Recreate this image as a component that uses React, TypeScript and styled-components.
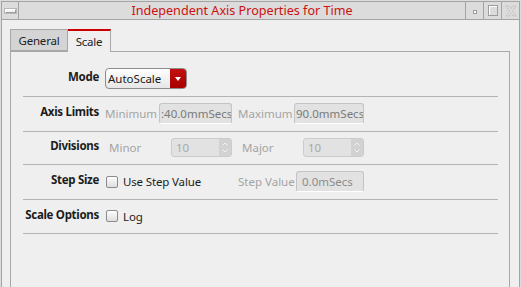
import React from "react";
import styled, { createGlobalStyle } from "styled-components";

const Global = createGlobalStyle`
  html, body { margin: 0; padding: 0; background: #dcdcdc; }
  body { font-family: "Noto Sans", "DejaVu Sans", sans-serif; font-size: 11.5px; }
  * { box-sizing: border-box; }
`;

const Frame = styled.div`
  width: 521px;
  height: 287px;
  padding: 1px 1px 0 1px;
  background: #dcdcdc;
  overflow: hidden;
`;

const Window = styled.div`
  height: 100%;
  border: 1px solid #a4a4a4;
  border-bottom: none;
  display: flex;
  flex-direction: column;
  background: #efefef;
`;

const TitleBar = styled.div`
  height: 18px;
  display: flex;
  background: #dcdcdc;
  border-bottom: 1px solid #a4a4a4;
  flex-shrink: 0;
`;

const TitleButton = styled.div<{ $w: number; $side: "left" | "right" }>`
  width: ${(p) => p.$w}px;
  height: 100%;
  display: flex;
  align-items: center;
  justify-content: center;
  ${(p) => (p.$side === "left" ? "border-right: 1px solid #a4a4a4;" : "border-left: 1px solid #a4a4a4;")}
  flex-shrink: 0;
`;

const MenuBar = styled.div`
  width: 11px;
  height: 4px;
  background: #f4f4f4;
  border: 1px solid #9c9c9c;
  border-top-color: #ffffff;
  border-left-color: #ffffff;
  box-shadow: 0 0 0 1px #b8b8b8;
`;

const Dot = styled.div`
  width: 4px;
  height: 4px;
  border: 1px solid #9c9c9c;
  background: #ffffff;
  margin-top: 2px;
`;

const MaxBox = styled.div`
  width: 10px;
  height: 11px;
  border: 1px solid #9c9c9c;
  box-shadow: inset 1px 1px 0 #ffffff;
`;

const Title = styled.div`
  flex: 1;
  text-align: center;
  color: #cc1111;
  font-size: 12.6px;
  line-height: 18px;
  white-space: nowrap;
`;

const Body = styled.div`
  flex: 1;
  display: flex;
  flex-direction: column;
  padding: 9px 9px 0 8px;
`;

const TabBar = styled.div`
  display: flex;
  align-items: flex-end;
  height: 22px;
  flex-shrink: 0;
`;

const Tab = styled.div<{ $active?: boolean; $w: number }>`
  position: relative;
  width: ${(p) => p.$w}px;
  height: ${(p) => (p.$active ? 23 : 22)}px;
  margin-bottom: ${(p) => (p.$active ? -1 : 0)}px;
  display: flex;
  align-items: center;
  justify-content: center;
  color: #222;
  letter-spacing: -0.2px;
  background: ${(p) => (p.$active ? "#efefef" : "#d4d4d4")};
  border: 1px solid #a8a8a8;
  border-bottom: ${(p) => (p.$active ? "none" : "1px solid #a8a8a8")};
  border-left: ${(p) => (p.$active ? "none" : "1px solid #a8a8a8")};
  border-top: ${(p) => (p.$active ? "2px solid #cc0000" : "1px solid #a8a8a8")};
  z-index: ${(p) => (p.$active ? 1 : 0)};
  padding-top: ${(p) => (p.$active ? 0 : 1)}px;
`;

const Pane = styled.div`
  flex: 1;
  border: 1px solid #a8a8a8;
  border-bottom: none;
  padding: 10px 11px 0 12px;
`;

const Row = styled.div`
  display: grid;
  grid-template-columns: 76px 127px 126px;
  column-gap: 6px;
  align-items: center;
  padding: 6px 0 7px;
  border-bottom: 1px solid #b4b4b4;
`;

const Label = styled.div`
  text-align: right;
  font-weight: bold;
  color: #1c1c1c;
  white-space: nowrap;
  letter-spacing: -0.3px;
  padding-bottom: 4px;
`;

const Cell = styled.div`
  display: flex;
  align-items: center;
  justify-content: space-between;
  white-space: nowrap;
`;

const Start = styled.div`
  display: flex;
  align-items: center;
  white-space: nowrap;
`;

const FieldLabel = styled.span<{ $indent?: number }>`
  color: #a4a4a4;
  padding-left: ${(p) => p.$indent ?? 0}px;
`;

const Combo = styled.div`
  width: 82px;
  height: 21px;
  display: flex;
  border: 1px solid #8c8c8c;
  border-radius: 4px;
  overflow: hidden;
  background: linear-gradient(#ffffff, #e6e6e6);
  color: #1a1a1a;
`;

const ComboText = styled.div`
  flex: 1;
  padding-left: 2px;
  line-height: 19px;
`;

const ComboArrow = styled.div`
  width: 16px;
  background: linear-gradient(#c41010, #a80000);
  display: flex;
  align-items: center;
  justify-content: center;
  &::after {
    content: "";
    border-left: 3.5px solid transparent;
    border-right: 3.5px solid transparent;
    border-top: 4px solid #ffffff;
  }
`;

const Input = styled.div<{ $w: number; $color: string; $pad?: number }>`
  width: ${(p) => p.$w}px;
  height: 21px;
  border: 1px solid #c4c4c4;
  border-bottom-color: #ffffff;
  border-radius: 3px;
  background: #e2e2e2;
  color: ${(p) => p.$color};
  padding-left: ${(p) => p.$pad ?? 1}px;
  line-height: 19px;
  overflow: hidden;
  white-space: nowrap;
`;

const Spin = styled.div`
  width: 61px;
  height: 19px;
  display: flex;
  border: 1px solid #cccccc;
  border-radius: 3px;
  background: #e2e2e2;
  overflow: hidden;
`;

const SpinText = styled.div`
  flex: 1;
  color: #a8a8a8;
  padding-left: 4px;
  line-height: 17px;
`;

const SpinButtons = styled.div`
  width: 12px;
  background: #d2d2d2;
  display: flex;
  align-items: center;
  justify-content: center;
`;

const Check = styled.div`
  width: 12px;
  height: 12px;
  margin-left: 1px;
  border: 1px solid #8c8c8c;
  border-radius: 2px;
  background: linear-gradient(#fdfdfd, #dedede);
`;

const CheckText = styled.span`
  margin-left: 5px;
  color: #1c1c1c;
  letter-spacing: -0.15px;
`;

const CheckLine = styled.div`
  display: flex;
  align-items: center;
  height: 20px;
  white-space: nowrap;
`;

const CloseIcon = () => (
  <svg width="12" height="12" viewBox="0 0 12 12">
    <path
      d="M1 1 L4 1 L6 3.5 L8 1 L11 1 L7.5 6 L11 11 L8 11 L6 8.5 L4 11 L1 11 L4.5 6 Z"
      fill="none"
      stroke="#bdbdbd"
      strokeWidth="1"
      strokeDasharray="2 1"
    />
  </svg>
);

const SpinArrows = () => (
  <svg width="8" height="13" viewBox="0 0 8 13">
    <path d="M1.5 4.5 L4 2 L6.5 4.5" fill="none" stroke="#f4f4f4" strokeWidth="1" />
    <path d="M1.5 8.5 L4 11 L6.5 8.5" fill="none" stroke="#f4f4f4" strokeWidth="1" />
  </svg>
);

export default function App() {
  return (
    <>
      <Global />
      <Frame>
        <Window>
          <TitleBar>
            <TitleButton $w={17} $side="left">
              <MenuBar />
            </TitleButton>
            <Title>Independent Axis Properties for Time</Title>
            <TitleButton $w={18} $side="right">
              <Dot />
            </TitleButton>
            <TitleButton $w={18} $side="right">
              <MaxBox />
            </TitleButton>
            <TitleButton $w={18} $side="right">
              <CloseIcon />
            </TitleButton>
          </TitleBar>
          <Body>
            <TabBar>
              <Tab $w={58}>General</Tab>
              <Tab $w={43} $active>
                Scale
              </Tab>
            </TabBar>
            <Pane>
              <Row>
                <Label>Mode</Label>
                <Start>
                  <Combo>
                    <ComboText>AutoScale</ComboText>
                    <ComboArrow />
                  </Combo>
                </Start>
              </Row>
              <Row>
                <Label>Axis Limits</Label>
                <Cell>
                  <FieldLabel>Minimum</FieldLabel>
                  <Input $w={73} $color="#7a7a7a">:40.0mmSecs</Input>
                </Cell>
                <Cell>
                  <FieldLabel>Maximum</FieldLabel>
                  <Input $w={70} $color="#7a7a7a" $pad={1}>
                    90.0mmSecs
                  </Input>
                </Cell>
              </Row>
              <Row>
                <Label>Divisions</Label>
                <Cell>
                  <FieldLabel $indent={4}>Minor</FieldLabel>
                  <Spin>
                    <SpinText>10</SpinText>
                    <SpinButtons>
                      <SpinArrows />
                    </SpinButtons>
                  </Spin>
                </Cell>
                <Cell>
                  <FieldLabel $indent={4}>Major</FieldLabel>
                  <Spin>
                    <SpinText>10</SpinText>
                    <SpinButtons>
                      <SpinArrows />
                    </SpinButtons>
                  </Spin>
                </Cell>
              </Row>
              <Row>
                <Label>Step Size</Label>
                <CheckLine>
                  <Check />
                  <CheckText>Use Step Value</CheckText>
                </CheckLine>
                <Cell>
                  <FieldLabel>Step Value</FieldLabel>
                  <Input $w={68} $color="#8c8c8c" $pad={5}>
                    0.0mSecs
                  </Input>
                </Cell>
              </Row>
              <Row>
                <Label>Scale Options</Label>
                <CheckLine>
                  <Check />
                  <CheckText>Log</CheckText>
                </CheckLine>
              </Row>
            </Pane>
          </Body>
        </Window>
      </Frame>
    </>
  );
}
